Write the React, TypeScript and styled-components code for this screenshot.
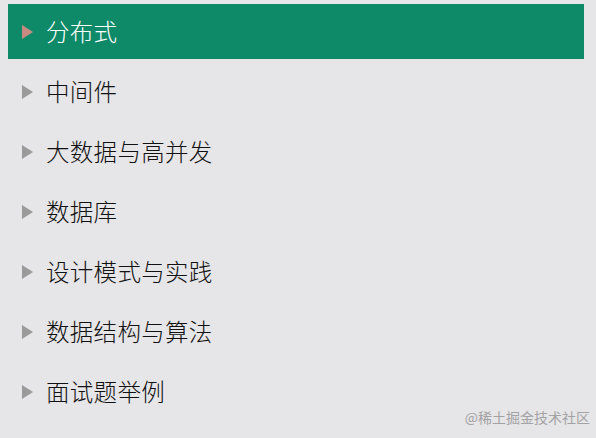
import React from "react";
import styled, { createGlobalStyle } from "styled-components";

const GlobalStyle = createGlobalStyle`
  html, body {
    margin: 0;
    padding: 0;
    background: #e6e5e7;
  }
  body {
    font-family: "Noto Sans CJK SC", "Noto Sans", sans-serif;
  }
`;

const Page = styled.div`
  position: relative;
  width: 596px;
  height: 438px;
  background: #e6e5e7;
  overflow: hidden;
`;

const Menu = styled.ul`
  list-style: none;
  margin: 0;
  padding: 4px 12px 0 8px;
  display: flex;
  flex-direction: column;
  gap: 5px;
`;

const Item = styled.li<{ $active?: boolean }>`
  height: 55px;
  display: flex;
  align-items: center;
  padding-left: 14px;
  background: ${(p) => (p.$active ? "#0f8a69" : "transparent")};
  color: ${(p) => (p.$active ? "#ffffff" : "#111111")};
  font-size: 23.5px;
  font-weight: 300;
  letter-spacing: 0.3px;
`;

const Arrow = styled.span<{ $active?: boolean }>`
  width: 0;
  height: 0;
  border-top: 7px solid transparent;
  border-bottom: 7px solid transparent;
  border-left: 11px solid ${(p) => (p.$active ? "#c98a82" : "#9a9a9a")};
  margin-right: 13px;
  margin-top: 1px;
`;

const Label = styled.span`
  line-height: 1;
`;

const Watermark = styled.div`
  position: absolute;
  right: 6px;
  bottom: 11px;
  font-size: 14px;
  color: #a3a3a5;
  font-family: "Noto Sans CJK SC", sans-serif;
`;

const items = [
  "分布式",
  "中间件",
  "大数据与高并发",
  "数据库",
  "设计模式与实践",
  "数据结构与算法",
  "面试题举例",
];

export default function App() {
  return (
    <>
      <GlobalStyle />
      <Page>
        <Menu>
          {items.map((t, i) => (
            <Item key={t} $active={i === 0}>
              <Arrow $active={i === 0} />
              <Label>{t}</Label>
            </Item>
          ))}
        </Menu>
        <Watermark>@稀土掘金技术社区</Watermark>
      </Page>
    </>
  );
}
